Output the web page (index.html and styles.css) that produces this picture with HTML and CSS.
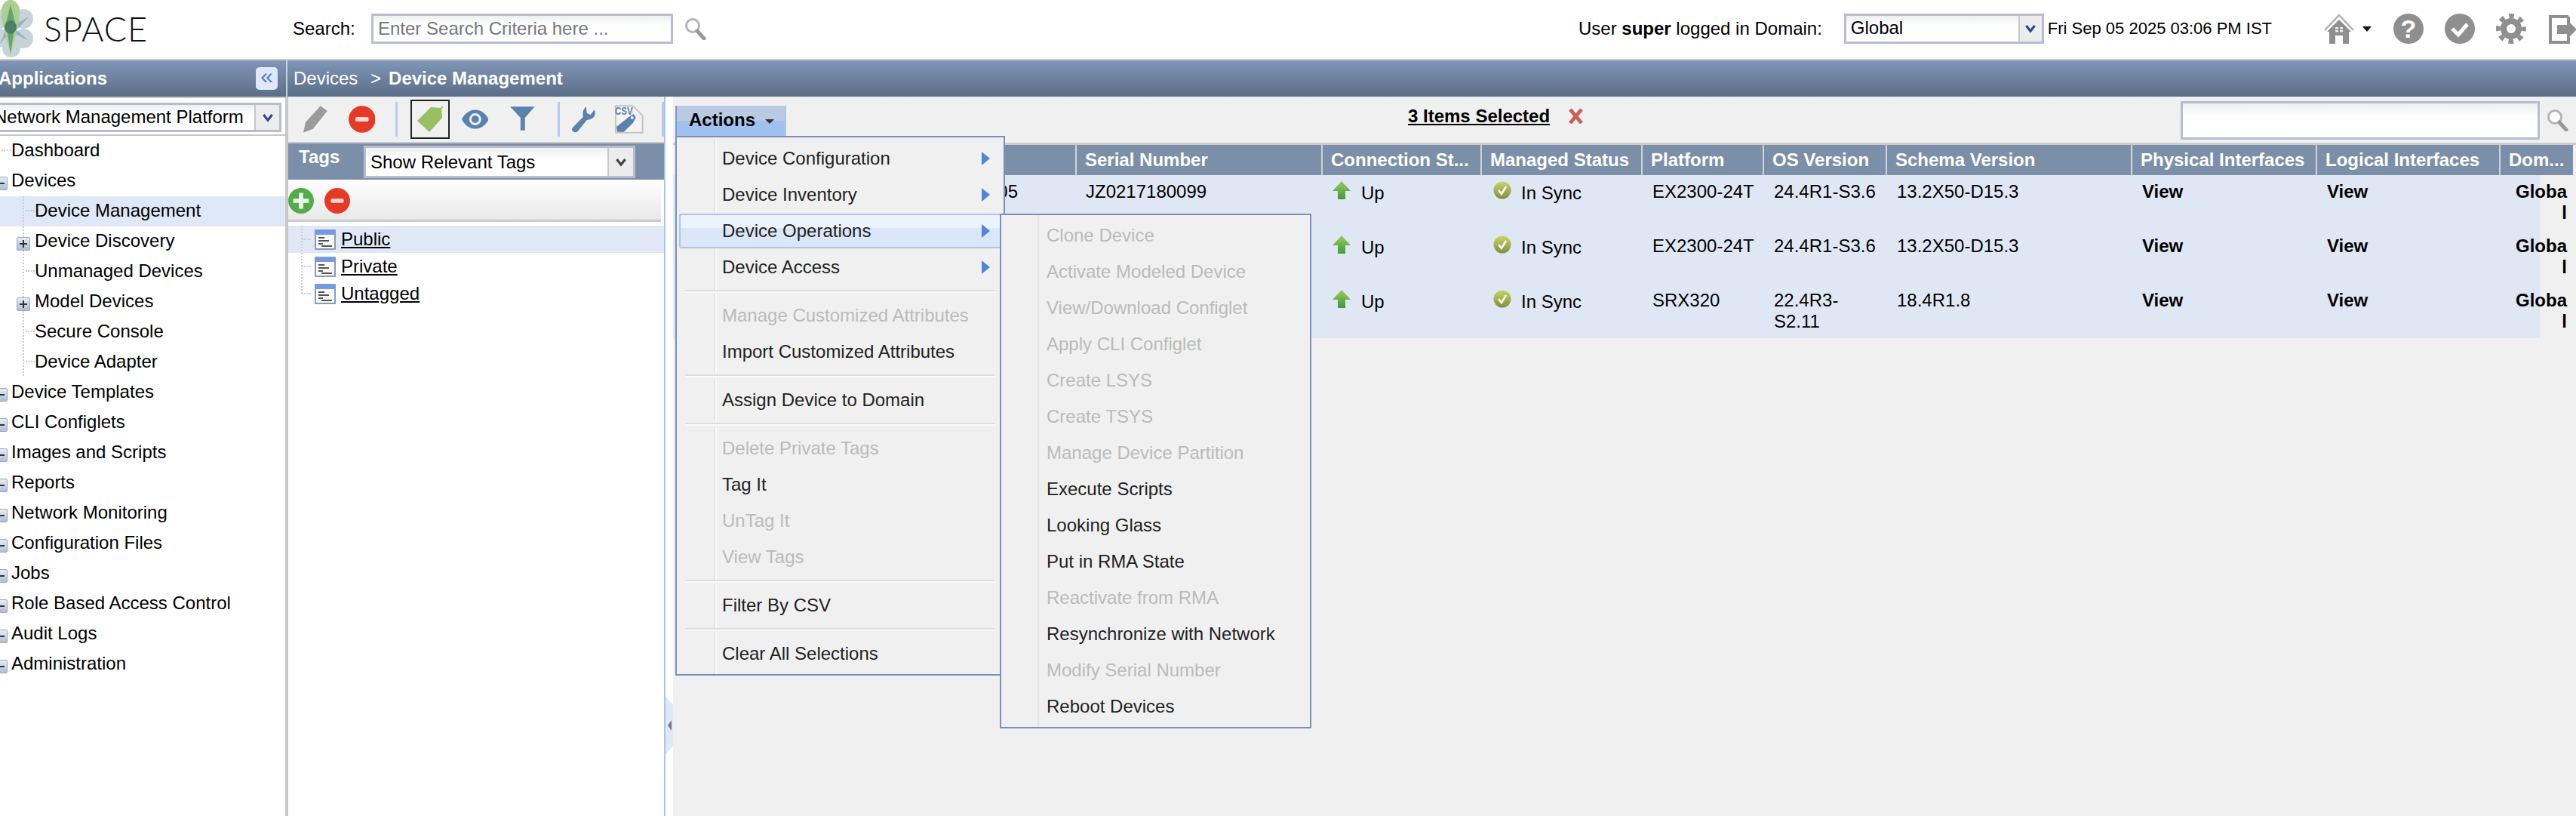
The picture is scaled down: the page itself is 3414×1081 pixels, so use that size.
FILE: index.html
```html
<!DOCTYPE html>
<html lang="en">
<head>
    <meta charset="UTF-8">
    <meta name="viewport" content="width=device-width, initial-scale=1.0">
    <title>Space - Device Management</title>
    <link rel="stylesheet" href="styles.css">
</head>
<body>
    <svg class="defs" width="0" height="0">
        <symbol id="i-search" viewBox="0 0 30 30">
            <circle cx="11" cy="11" r="8.5" fill="#fff" stroke="#b4b4b4" stroke-width="3"/>
            <path d="M17 18l9 10" stroke="#999" stroke-width="5" stroke-linecap="round"/>
        </symbol>
        <symbol id="i-minus" viewBox="0 0 36 36">
            <circle cx="18" cy="18" r="18" fill="#e53a28"/>
            <rect x="9" y="15" width="18" height="6" rx="2" fill="#f6d8d2"/>
        </symbol>
        <symbol id="i-plus" viewBox="0 0 36 36">
            <circle cx="18" cy="18" r="18" fill="#52ac4c"/>
            <path d="M15 7h6v8h8v6h-8v8h-6v-8H7v-6h8z" fill="#eef6ec"/>
        </symbol>
        <symbol id="i-chev" viewBox="0 0 20 16">
            <path d="M3 3l7 9 7-9" fill="none" stroke="currentColor" stroke-width="4"/>
        </symbol>
        <symbol id="i-doc" viewBox="0 0 28 27">
            <rect width="28" height="27" rx="1" fill="#8b9bb0"/>
            <rect x="1" y="1" width="26" height="5" fill="#6f9bea"/>
            <rect x="2" y="7" width="24" height="18" fill="#f8f8f8"/>
            <path d="M5 11h8M5 15h14M5 19h6M9 22h14" stroke="#555" stroke-width="2"/>
        </symbol>
        <symbol id="i-arrow" viewBox="0 0 24 24">
            <defs>
                <linearGradient id="g-up" x1="0" y1="0" x2="0" y2="1">
                    <stop offset="0" stop-color="#9ccc5c"/>
                    <stop offset="1" stop-color="#3f9a3a"/>
                </linearGradient>
            </defs>
            <path d="M12 0l12 13h-7v11H7V13H0z" fill="url(#g-up)"/>
        </symbol>
        <symbol id="i-sync" viewBox="0 0 24 24">
            <defs>
                <linearGradient id="g-sync" x1="0" y1="0" x2="0" y2="1">
                    <stop offset="0" stop-color="#c8d668"/>
                    <stop offset="1" stop-color="#7f8f3a"/>
                </linearGradient>
            </defs>
            <circle cx="12" cy="12" r="11.5" fill="url(#g-sync)"/>
            <path d="M7 12l4 5 6-10" fill="none" stroke="#fff" stroke-width="2.5"/>
        </symbol>
        <symbol id="i-right" viewBox="0 0 11 18">
            <path d="M0 0l11 9-11 9z" fill="#4f86d8"/>
        </symbol>
    </svg>

    <div class="page">
        <header class="topbar">
            <div class="logo">
                <svg class="logo-mark" viewBox="0 0 46 76" width="46" height="76">
                    <g fill="#b9cad2" opacity="0.8">
                        <circle cx="31" cy="25" r="13"/>
                        <circle cx="31" cy="51" r="13"/>
                        <circle cx="15" cy="64" r="12"/>
                        <circle cx="-2" cy="50" r="13"/>
                        <circle cx="-2" cy="25" r="13"/>
                    </g>
                    <path d="M14 36L38 22 22 40 38 54 14 42 0 58 8 38 0 20z" fill="#8aa2ae" opacity="0.7"/>
                    <path d="M14 0c8 0 13 8 12 18-1 17-8 37-12 54C10 55 3 35 2 18 1 8 6 0 14 0z" fill="#a9d08f"/>
                    <path d="M14 6l6 24-2 14-4 28-4-28-2-14z" fill="#6aa273"/>
                    <ellipse cx="14" cy="36" rx="8" ry="9" fill="#4d7f68"/>
                </svg>
                <span class="logo-text">SPACE</span>
            </div>
            <label class="search-label">Search:</label>
            <input class="search-input" type="text" placeholder="Enter Search Criteria here ...">
            <svg class="search-icon"><use href="#i-search"/></svg>

            <div class="user-info">User <b>super</b> logged in Domain:</div>
            <div class="dropdown domain-select">
                <span class="dropdown-text">Global</span>
                <span class="dropdown-btn blue"><svg width="16" height="16"><use href="#i-chev"/></svg></span>
            </div>
            <div class="clock">Fri Sep 05 2025 03:06 PM IST</div>
            <div class="top-icons">
                <svg class="ic-home" width="40" height="40" viewBox="0 0 40 40">
                    <path d="M1 22L20 2l19 20" fill="none" stroke="#b0b0b0" stroke-width="2.500"/>
                    <path d="M20 8l16 16h-3v16h-8V29h-10v11H7V24H4z" fill="#8f8f8f"/>
                    <path d="M15 18h4v2.500h-4zM21 18h4v2.500h-4zM15 22h4v2.500h-4zM21 22h4v2.500h-4z" fill="#eee"/>
                </svg>
                <span class="home-caret"></span>
                <svg class="ic-help" width="40" height="40" viewBox="0 0 40 40">
                    <circle cx="20" cy="20" r="20" fill="#8f8f8f"/>
                    <text x="20" y="32" text-anchor="middle" class="ic-q">?</text>
                </svg>
                <svg class="ic-check" width="40" height="40" viewBox="0 0 40 40">
                    <circle cx="20" cy="20" r="20" fill="#8f8f8f"/>
                    <path d="M10 20l8 8 12-14" fill="none" stroke="#fff" stroke-width="5"/>
                </svg>
                <svg class="ic-gear" width="42" height="40" viewBox="0 0 42 40">
                    <circle cx="21" cy="20" r="14" fill="#8f8f8f"/>
                    <circle cx="21" cy="20" r="17" fill="none" stroke="#8f8f8f" stroke-width="6" stroke-dasharray="6.680 6.670" stroke-dashoffset="3.300"/>
                    <circle cx="21" cy="20" r="6" fill="#fff"/>
                </svg>
                <svg class="ic-exit" width="36" height="40" viewBox="0 0 36 40">
                    <path d="M26 4H2v34h24v-7M26 4v8" fill="none" stroke="#8f8f8f" stroke-width="4"/>
                    <path d="M11 15h13V8l13 13-13 13v-7H11z" fill="#8f8f8f"/>
                </svg>
            </div>
        </header>

        <div class="titlebar">
            <div class="title-left">
                <span class="title-apps">Applications</span>
                <span class="collapse-btn">&laquo;</span>
            </div>
            <div class="breadcrumb">Devices <span class="crumb-sep">&gt;</span> <b>Device Management</b></div>
        </div>

        <div class="columns">
            <nav class="nav">
                <div class="nav-select">
                    <div class="dropdown platform-select">
                        <span class="dropdown-text">Network Management Platform</span>
                        <span class="dropdown-btn blue"><svg width="16" height="16"><use href="#i-chev"/></svg></span>
                    </div>
                </div>
                <ul class="tree">
                    <li class="tree-row"><span class="dots top-dots"></span>Dashboard</li>
                    <li class="tree-row"><span class="exp top-exp"></span>Devices</li>
                    <li class="tree-row sub selected"><span class="dots"></span>Device Management</li>
                    <li class="tree-row sub"><span class="exp"></span>Device Discovery</li>
                    <li class="tree-row sub"><span class="dots"></span>Unmanaged Devices</li>
                    <li class="tree-row sub"><span class="exp"></span>Model Devices</li>
                    <li class="tree-row sub"><span class="dots"></span>Secure Console</li>
                    <li class="tree-row sub"><span class="dots"></span>Device Adapter</li>
                    <li class="tree-row"><span class="exp top-exp"></span>Device Templates</li>
                    <li class="tree-row"><span class="exp top-exp"></span>CLI Configlets</li>
                    <li class="tree-row"><span class="exp top-exp"></span>Images and Scripts</li>
                    <li class="tree-row"><span class="exp top-exp"></span>Reports</li>
                    <li class="tree-row"><span class="exp top-exp"></span>Network Monitoring</li>
                    <li class="tree-row"><span class="exp top-exp"></span>Configuration Files</li>
                    <li class="tree-row"><span class="exp top-exp"></span>Jobs</li>
                    <li class="tree-row"><span class="exp top-exp"></span>Role Based Access Control</li>
                    <li class="tree-row"><span class="exp top-exp"></span>Audit Logs</li>
                    <li class="tree-row"><span class="exp top-exp"></span>Administration</li>
                </ul>
            </nav>

            <section class="tags-panel">
                <div class="tool-row">
                    <svg class="tool pencil" width="32" height="36" viewBox="0 0 32 36">
                        <path d="M23 0l9 7-19 24-13 5 3-14z" fill="#9b9b9b"/>
                    </svg>
                    <svg class="tool minus" width="36" height="36"><use href="#i-minus"/></svg>
                    <span class="tool-sep first"></span>
                    <span class="tool-active">
                        <svg width="38" height="38" viewBox="0 0 38 38">
                            <path d="M36 2l-7 8" stroke="#a5c878" stroke-width="2" fill="none"/>
                            <path d="M20 4l14 1 1 13-17 19L2 22z" fill="#98c060" transform="translate(0 -1)"/>
                        </svg>
                    </span>
                    <svg class="tool eye" width="36" height="26" viewBox="0 0 36 26">
                        <path d="M0 13C8 -4 28 -4 36 13 28 30 8 30 0 13z" fill="#5b82ad"/>
                        <circle cx="18" cy="13" r="8" fill="#eef2f6"/>
                        <circle cx="18" cy="13" r="5" fill="#5b82ad"/>
                    </svg>
                    <svg class="tool funnel" width="33" height="32" viewBox="0 0 33 32">
                        <path d="M0 0h33L20 15v17h-6V15z" fill="#5b82ad"/>
                    </svg>
                    <span class="tool-sep second"></span>
                    <svg class="tool wrench" width="33" height="36" viewBox="0 0 33 36">
                        <path d="M20 1l1 9 5 2 5-7c3 7 0 13-10 14L9 34c-3 3-8 1-8-2 0-2 1-3 2-4l13-13c-1-6 0-11 4-14z" fill="#5b82ad"/>
                    </svg>
                    <svg class="tool csv" width="38" height="38" viewBox="0 0 38 38">
                        <path d="M1 1h23l13 13v23H1z" fill="#f4f4f4" stroke="#c4c4c4" stroke-width="2"/>
                        <path d="M24 1v13h13" fill="none" stroke="#d8d8d8"/>
                        <text x="0" y="13" class="csv-text" textLength="24" lengthAdjust="spacingAndGlyphs">CSV</text>
                        <path d="M3 36l-1-7 14-11 1-1 8-5 3 5-4 7-12 12z" fill="#5b82ad"/>
                        <circle cx="23" cy="17" r="2" fill="#f4f4f4"/>
                    </svg>
                    <span class="tool-sep third"></span>
                </div>
                <div class="tags-head">
                    <span class="tags-title">Tags</span>
                    <div class="dropdown tags-select">
                        <span class="dropdown-text">Show Relevant Tags</span>
                        <span class="dropdown-btn"><svg width="16" height="16"><use href="#i-chev"/></svg></span>
                    </div>
                </div>
                <div class="tags-tools">
                    <svg width="34" height="36"><use href="#i-plus"/></svg>
                    <svg width="34" height="36"><use href="#i-minus"/></svg>
                </div>
                <ul class="tag-tree">
                    <li class="tag-row selected"><span class="dots"></span><svg width="28" height="27"><use href="#i-doc"/></svg><u>Public</u></li>
                    <li class="tag-row"><span class="dots"></span><svg width="28" height="27"><use href="#i-doc"/></svg><u>Private</u></li>
                    <li class="tag-row"><span class="dots"></span><svg width="28" height="27"><use href="#i-doc"/></svg><u>Untagged</u></li>
                </ul>
            </section>

            <div class="splitter">
                <svg width="10" height="76" viewBox="0 0 10 76">
                    <path d="M0 0l10 10v56L0 76z" fill="#dfe8f6"/>
                    <path d="M8 31l-5 7 5 7z" fill="#777"/>
                </svg>
            </div>

            <main class="content">
                <div class="content-bar">
                    <div class="actions">
                        <button class="actions-btn">Actions <span class="caret"></span></button>
                        <div class="menu">
                            <div class="menu-item">Device Configuration<svg class="more" width="11" height="18"><use href="#i-right"/></svg></div>
                            <div class="menu-item">Device Inventory<svg class="more" width="11" height="18"><use href="#i-right"/></svg></div>
                            <div class="menu-item active">Device Operations<svg class="more" width="11" height="18"><use href="#i-right"/></svg></div>
                            <div class="menu-item">Device Access<svg class="more" width="11" height="18"><use href="#i-right"/></svg></div>
                            <div class="menu-sep"></div>
                            <div class="menu-item off">Manage Customized Attributes</div>
                            <div class="menu-item">Import Customized Attributes</div>
                            <div class="menu-sep"></div>
                            <div class="menu-item">Assign Device to Domain</div>
                            <div class="menu-sep"></div>
                            <div class="menu-item off">Delete Private Tags</div>
                            <div class="menu-item">Tag It</div>
                            <div class="menu-item off">UnTag It</div>
                            <div class="menu-item off">View Tags</div>
                            <div class="menu-sep"></div>
                            <div class="menu-item">Filter By CSV</div>
                            <div class="menu-sep"></div>
                            <div class="menu-item">Clear All Selections</div>

                            <div class="submenu">
                                <div class="menu-item off">Clone Device</div>
                                <div class="menu-item off">Activate Modeled Device</div>
                                <div class="menu-item off">View/Download Configlet</div>
                                <div class="menu-item off">Apply CLI Configlet</div>
                                <div class="menu-item off">Create LSYS</div>
                                <div class="menu-item off">Create TSYS</div>
                                <div class="menu-item off">Manage Device Partition</div>
                                <div class="menu-item">Execute Scripts</div>
                                <div class="menu-item">Looking Glass</div>
                                <div class="menu-item">Put in RMA State</div>
                                <div class="menu-item off">Reactivate from RMA</div>
                                <div class="menu-item">Resynchronize with Network</div>
                                <div class="menu-item off">Modify Serial Number</div>
                                <div class="menu-item">Reboot Devices</div>
                            </div>
                        </div>
                    </div>
                    <div class="selected-count"><u>3 Items Selected</u></div>
                    <svg class="clear-x" width="21" height="20" viewBox="0 0 21 20">
                        <path d="M3 1l15 18M18 1L3 19" stroke="#c9605c" stroke-width="5"/>
                    </svg>
                    <input class="grid-search" type="text">
                    <svg class="grid-search-icon"><use href="#i-search"/></svg>
                </div>

                <div class="grid">
                    <div class="grid-row grid-head">
                        <div class="cell"></div>
                        <div class="cell">Serial Number</div>
                        <div class="cell">Connection St...</div>
                        <div class="cell">Managed Status</div>
                        <div class="cell">Platform</div>
                        <div class="cell">OS Version</div>
                        <div class="cell">Schema Version</div>
                        <div class="cell">Physical Interfaces</div>
                        <div class="cell">Logical Interfaces</div>
                        <div class="cell">Dom...</div>
                    </div>
                    <div class="grid-row">
                        <div class="cell hidden-col">05</div>
                        <div class="cell serial">JZ0217180099</div>
                        <div class="cell status"><svg width="24" height="24"><use href="#i-arrow"/></svg>Up</div>
                        <div class="cell status sync"><svg width="24" height="24"><use href="#i-sync"/></svg>In Sync</div>
                        <div class="cell">EX2300-24T</div>
                        <div class="cell">24.4R1-S3.6</div>
                        <div class="cell">13.2X50-D15.3</div>
                        <div class="cell link">View</div>
                        <div class="cell link">View</div>
                        <div class="cell domain">Global</div>
                    </div>
                    <div class="grid-row">
                        <div class="cell hidden-col"></div>
                        <div class="cell"></div>
                        <div class="cell status"><svg width="24" height="24"><use href="#i-arrow"/></svg>Up</div>
                        <div class="cell status sync"><svg width="24" height="24"><use href="#i-sync"/></svg>In Sync</div>
                        <div class="cell">EX2300-24T</div>
                        <div class="cell">24.4R1-S3.6</div>
                        <div class="cell">13.2X50-D15.3</div>
                        <div class="cell link">View</div>
                        <div class="cell link">View</div>
                        <div class="cell domain">Global</div>
                    </div>
                    <div class="grid-row">
                        <div class="cell hidden-col"></div>
                        <div class="cell"></div>
                        <div class="cell status"><svg width="24" height="24"><use href="#i-arrow"/></svg>Up</div>
                        <div class="cell status sync"><svg width="24" height="24"><use href="#i-sync"/></svg>In Sync</div>
                        <div class="cell">SRX320</div>
                        <div class="cell">22.4R3-S2.11</div>
                        <div class="cell">18.4R1.8</div>
                        <div class="cell link">View</div>
                        <div class="cell link">View</div>
                        <div class="cell domain">Global</div>
                    </div>
                </div>
            </main>
        </div>
    </div>
</body>
</html>
```

FILE: styles.css
```css
* {
    box-sizing: border-box;
}

body {
    margin: 0;
    font-family: "Liberation Sans", Arial, sans-serif;
    font-size: 24px;
    color: #000;
    background-color: #fff;
    overflow: hidden;
}

ul {
    list-style: none;
    margin: 0;
    padding: 0;
}

.defs {
    display: block;
    height: 0;
}

.page {
    width: 3414px;
    height: 1081px;
    overflow: hidden;
}

/* top header */
.topbar {
    display: flex;
    align-items: center;
    height: 78px;
    padding-bottom: 2px;
    background-color: #fff;
}

.logo {
    display: flex;
    align-items: center;
    width: 388px;
}

.logo-mark {
    flex: none;
}

.logo-text {
    margin-left: 12px;
    font-family: Lato, sans-serif;
    font-weight: 300;
    font-size: 45px;
    letter-spacing: 1px;
    color: #111;
}

.search-label {
    width: 104px;
}

.search-input {
    width: 400px;
    height: 40px;
    padding: 0 6px;
    font: 24px "Liberation Sans", Arial, sans-serif;
    border: 3px solid #b9bcd0;
    background: linear-gradient(#eef0f0, #fff 40%);
    outline: none;
}

.search-input::placeholder {
    color: #777;
    opacity: 1;
}

.search-icon {
    width: 30px;
    height: 30px;
    margin-left: 15px;
}

.user-info {
    margin-left: auto;
    margin-right: 29px;
}

.dropdown {
    display: flex;
    align-items: stretch;
    height: 40px;
    border: 3px solid #b9bcd0;
    background: linear-gradient(#eef0f0, #fff 40%);
}

.dropdown-text {
    flex: 1;
    line-height: 32px;
    white-space: nowrap;
}

.dropdown-btn {
    display: flex;
    align-items: center;
    justify-content: center;
    width: 31px;
    border-left: 2px solid #c8c8c8;
    background-color: #ececec;
    color: #444;
}

.dropdown-btn.blue {
    color: #2d4a8e;
}

.domain-select {
    width: 265px;
    padding-left: 6px;
}

.clock {
    margin-left: 5px;
    font-size: 22px;
}

.top-icons {
    display: flex;
    align-items: center;
    margin-left: 69px;
}

.home-caret {
    width: 0;
    height: 0;
    margin-left: 11px;
    border-left: 6px solid transparent;
    border-right: 6px solid transparent;
    border-top: 7px solid #111;
}

.ic-help {
    margin-left: 29px;
}

.ic-check {
    margin-left: 28px;
}

.ic-gear {
    margin-left: 27px;
}

.ic-exit {
    margin-left: 29px;
}

.ic-q {
    font-size: 34px;
    font-weight: bold;
    fill: #fff;
}

/* blue title bar */
.titlebar {
    display: flex;
    height: 50px;
    color: #fff;
    background: linear-gradient(#8197b9, #5b6d86);
    border-top: 2px solid #c8ccd4;
}

.title-left {
    display: flex;
    align-items: center;
    justify-content: space-between;
    width: 381px;
    padding-right: 11px;
    border-right: 2px solid #c8d0dc;
}

.title-apps {
    margin-left: -2px;
    font-weight: bold;
}

.collapse-btn {
    width: 29px;
    height: 30px;
    font-size: 30px;
    line-height: 24px;
    text-align: center;
    color: #4f7cc4;
    background-color: #dfe9f9;
    border-radius: 5px;
}

.breadcrumb {
    display: flex;
    align-items: center;
    gap: 6px;
    padding-left: 8px;
    white-space: pre;
}

.crumb-sep {
    margin: 0 4px;
}

/* main columns */
.columns {
    display: flex;
    height: 953px;
}

.nav {
    flex: none;
    width: 382px;
    border-right: 4px solid #c8c8c8;
    background-color: #fff;
}

.nav-select {
    height: 52px;
    padding: 6px 5px 0 0;
    border-top: 2px solid #c8c8c8;
    border-bottom: 2px solid #c8c8c8;
}

.platform-select {
    width: 373px;
    height: 39px;
    border-left: none;
}

.platform-select .dropdown-text {
    margin-left: -8px;
}

.platform-select .dropdown-btn {
    width: 33px;
}

.tree-row {
    display: flex;
    align-items: center;
    height: 40px;
    padding-bottom: 3px;
    white-space: nowrap;
}

.tree-row.sub {
    padding-left: 22px;
    background-image: repeating-linear-gradient(#ccc 0 2px, transparent 2px 4px);
    background-size: 2px 100%;
    background-position: 30px 0;
    background-repeat: no-repeat;
}

.tree-row.selected {
    background-color: #dfe8f7;
}

.tree-row .dots {
    width: 12px;
    height: 0;
    margin-left: 12px;
    border-top: 2px dotted #ccc;
}

.tree-row .top-dots {
    width: 13px;
    margin-left: 2px;
}

.exp {
    flex: none;
    width: 18px;
    height: 18px;
    margin: 8px 6px 0 0;
    border: 1px solid #9aa8bc;
    border-radius: 2px;
    background:
        linear-gradient(#333, #333) center / 10px 2px no-repeat,
        linear-gradient(#333, #333) center / 2px 10px no-repeat,
        linear-gradient(#e6edf6, #aebdd2);
}

.exp.top-exp {
    margin-left: -8px;
    margin-right: 5px;
    background:
        linear-gradient(#333, #333) center / 10px 2px no-repeat,
        linear-gradient(#e6edf6, #aebdd2);
}

/* tags panel */
.tags-panel {
    flex: none;
    width: 500px;
    border-right: 2px solid #a9c4ec;
    background-color: #fff;
}

.tool-row {
    display: flex;
    align-items: center;
    height: 60px;
    padding-left: 20px;
    background-color: #f0f0f0;
}

.tool.minus {
    margin-left: 28px;
}

.tool-sep {
    width: 3px;
    height: 46px;
    background-color: #b5cdf0;
}

.tool-sep.first {
    margin-left: 27px;
}

.tool-sep.second {
    margin-left: 30px;
}

.tool-sep.third {
    margin-left: 24px;
}

.tool-active {
    display: flex;
    align-items: center;
    justify-content: center;
    width: 52px;
    height: 52px;
    margin-left: 17px;
    border: 2px solid #222;
}

.tool.eye {
    margin-left: 16px;
}

.tool.funnel {
    margin: 0 0 3px 29px;
}

.tool.wrench {
    margin-left: 15px;
}

.tool.csv {
    margin-left: 26px;
}

.csv-text {
    font-size: 15px;
    font-weight: bold;
    fill: #5b82ad;
}

.tags-head {
    display: flex;
    height: 50px;
    padding: 3px 0 0 14px;
    border-top: 2px solid #c8c8c8;
    background-color: #7b90a8;
}

.tags-title {
    width: 86px;
    font-weight: bold;
    line-height: 30px;
    color: #fff;
}

.tags-select {
    width: 360px;
    height: 43px;
    padding-left: 6px;
}

.tags-select .dropdown-text {
    line-height: 37px;
}

.tags-select .dropdown-btn {
    width: 34px;
}

.tags-tools {
    display: flex;
    gap: 14px;
    width: 494px;
    height: 56px;
    padding-top: 10px;
    border-bottom: 3px solid #ccc;
    background: linear-gradient(#fff, #e8e8e8);
}

.tag-tree {
    padding-top: 5px;
}

.tag-row {
    display: flex;
    align-items: center;
    gap: 7px;
    height: 36px;
    padding-left: 18px;
    background-image: repeating-linear-gradient(#ccc 0 2px, transparent 2px 4px);
    background-size: 2px 100%;
    background-position: 17px 0;
    background-repeat: no-repeat;
}

.tag-row:last-child {
    background-size: 2px 50%;
}

.tag-row.selected {
    background-color: #e0e8f7;
}

.tag-row .dots {
    width: 12px;
    margin-right: -2px;
    border-top: 2px dotted #ccc;
}

.tag-row u {
    display: block;
    line-height: 26px;
}

.splitter {
    flex: none;
    width: 10px;
    padding-top: 795px;
    background-color: #fff;
}

.splitter svg {
    display: block;
}

/* right hand content */
.content {
    flex: 1;
    min-width: 0;
    background-color: #f0f0f0;
}

.content-bar {
    display: flex;
    align-items: flex-start;
    height: 61px;
}

.actions {
    position: relative;
    flex: none;
    width: 147px;
    height: 40px;
    margin: 12px 0 0 3px;
    z-index: 5;
}

.actions-btn {
    display: block;
    width: 147px;
    height: 40px;
    padding: 0 0 2px 16px;
    text-align: left;
    font: bold 24px "Liberation Sans", Arial, sans-serif;
    color: #000;
    border: none;
    border-left: 2px solid #7f9ac4;
    border-right: 2px solid #b0c6e6;
    background: linear-gradient(#b9cbe2 50%, #9fc1ef 50%);
}

.caret {
    display: inline-block;
    margin: 0 0 3px 6px;
    border-left: 6px solid transparent;
    border-right: 6px solid transparent;
    border-top: 6px solid #333;
}

.menu {
    position: absolute;
    top: 40px;
    left: 0;
    width: 437px;
    height: 715px;
    padding-top: 4px;
    border: 2px solid #7a8fbd;
    background:
        linear-gradient(#e4e4e4, #e4e4e4) 49px 0 / 2px 100% no-repeat,
        linear-gradient(#fafafa, #fafafa) 51px 0 / 2px 100% no-repeat,
        #f0f0f0;
}

.menu-item {
    display: flex;
    align-items: center;
    height: 48px;
    margin-left: 3px;
    padding: 0 18px 0 57px;
    color: #222;
    white-space: nowrap;
}

.menu-item.off {
    color: #bbb;
}

.menu-item.active {
    height: 46px;
    margin-top: 1px;
    margin-bottom: 1px;
    border: 2px solid #a9c4ec;
    border-radius: 3px;
    padding-left: 55px;
    padding-right: 16px;
    background: linear-gradient(#edf3fd 40%, #dbe6f8 40%);
}

.more {
    margin-left: auto;
}

.menu-sep {
    margin: 6px 11px;
    border-top: 2px solid #ddd;
    border-bottom: 2px solid #fafafa;
}

.submenu {
    position: absolute;
    top: 101px;
    left: 428px;
    width: 413px;
    height: 682px;
    padding-top: 3px;
    border: 2px solid #7a8fbd;
    background:
        linear-gradient(#e4e4e4, #e4e4e4) 48px 0 / 2px 100% no-repeat,
        #f0f0f0;
}

.selected-count {
    flex: none;
    margin: 12px 0 0 824px;
    font-weight: bold;
}

.clear-x {
    flex: none;
    margin: 16px 0 0 24px;
}

.grid-search {
    flex: none;
    width: 476px;
    height: 51px;
    margin: 6px 0 0 auto;
    border: 3px solid #b9bcd0;
    background: linear-gradient(#eef0f0, #fff 40%);
    outline: none;
}

.grid-search-icon {
    flex: none;
    width: 30px;
    height: 30px;
    margin: 16px 9px 0 9px;
}

.grid {
    border-top: 3px solid #ccc;
}

.grid-row {
    display: grid;
    grid-template-columns: 533px 326px 211px 213px 161px 163px 325px 245px 243px 98px;
    width: 2474px;
    height: 72px;
    background-color: #e0e7f4;
}

.grid-head {
    width: 2518px;
    height: 40px;
    font-weight: bold;
    color: #fff;
    background-color: transparent;
}

.cell {
    padding: 8px 10px 0 15px;
    line-height: 28px;
}

.grid-head .cell {
    padding: 4px 0 0 11px;
    border-left: 2px solid #ccd4dc;
    line-height: 32px;
    white-space: nowrap;
    background-color: #7b90a8;
}

.grid-head .cell:first-child {
    margin-left: 3px;
    border-left: none;
}

.hidden-col {
    padding-right: 76px;
    text-align: right;
}

.serial {
    padding-left: 14px;
}

.status {
    display: flex;
    align-items: flex-start;
    gap: 14px;
    padding-top: 10px;
    white-space: nowrap;
}

.status svg {
    flex: none;
    margin-top: -2px;
}

.status.sync {
    gap: 13px;
    padding-left: 17px;
}

.link {
    font-weight: bold;
}

.domain {
    padding: 8px 8px 0 22px;
    font-weight: bold;
    text-align: right;
    word-break: break-all;
}
```
